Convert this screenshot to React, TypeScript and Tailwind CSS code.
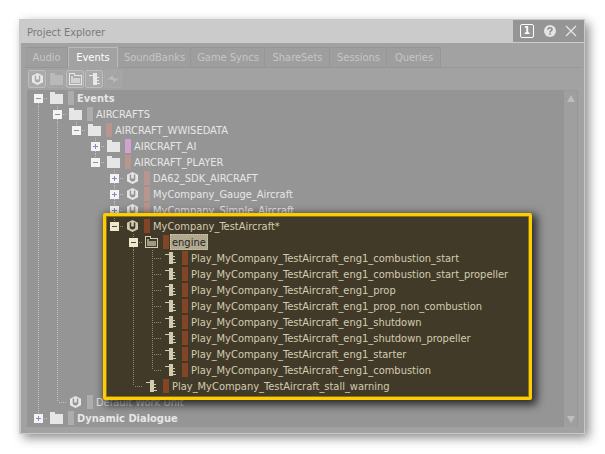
import React from "react";

type IconKind = "folder" | "virtual" | "unit" | "event";

function FolderIcon() {
  return (
    <svg width="13" height="12" viewBox="0 0 13 12" shapeRendering="crispEdges" fill="currentColor" aria-hidden="true">
      <path d="M0 0h5v2h8v10H0z" />
    </svg>
  );
}

function VirtualFolderIcon() {
  return (
    <svg width="13" height="12" viewBox="0 0 13 12" shapeRendering="crispEdges" fill="currentColor" aria-hidden="true">
      <path fillRule="evenodd" d="M0 0h6v2h7v10H0zM1 1v10h11V3H5V1z" />
      <path opacity=".65" d="M2 3h2v2h7v5H2z" />
    </svg>
  );
}

function UnitIcon() {
  return (
    <svg width="11" height="12" viewBox="0 0 11 12" fill="currentColor" aria-hidden="true">
      <path fillRule="evenodd" d="M5.500 0L11 2.700v6.600L5.500 12 0 9.300V2.700zM2.700 2.600V7a2.800 2.400 0 0 0 5.600 0V2.600H6.800V6.500H4.200V2.600z" />
    </svg>
  );
}

function EventIcon() {
  return (
    <svg width="11" height="12" viewBox="0 0 11 12" shapeRendering="crispEdges" fill="currentColor" aria-hidden="true">
      <path d="M0 2h4v1H0zM4 0h4v12H4zM8 4h2v1H8zM8 7h2v1H8zM8 10h3v1H8z" />
    </svg>
  );
}

const icons: Record<IconKind, React.ReactNode> = {
  folder: <FolderIcon />,
  virtual: <VirtualFolderIcon />,
  unit: <UnitIcon />,
  event: <EventIcon />,
};

const bars = {
  gray: "bg-[#adadad]",
  rose: "bg-[#b8958d]",
  pink: "bg-[#d3a0d3]",
  rust: "bg-[#824627]",
};

interface Item {
  label: string;
  level: number;
  icon: IconKind;
  bar: keyof typeof bars;
  guides?: number[];
  open?: boolean;
  first?: boolean;
  last?: boolean;
  bold?: boolean;
  selected?: boolean;
}

const before: Item[] = [
  { label: "Events", level: 0, icon: "folder", bar: "gray", open: true, first: true, bold: true },
  { label: "AIRCRAFTS", level: 1, icon: "folder", bar: "gray", open: true, guides: [0] },
  { label: "AIRCRAFT_WWISEDATA", level: 2, icon: "folder", bar: "rose", open: true, last: true, guides: [0, 1] },
  { label: "AIRCRAFT_AI", level: 3, icon: "folder", bar: "pink", open: false, guides: [0, 1] },
  { label: "AIRCRAFT_PLAYER", level: 3, icon: "folder", bar: "rose", open: true, last: true, guides: [0, 1] },
  { label: "DA62_SDK_AIRCRAFT", level: 4, icon: "unit", bar: "rose", open: false, guides: [0, 1] },
  { label: "MyCompany_Gauge_Aircraft", level: 4, icon: "unit", bar: "rose", open: false, guides: [0, 1] },
  { label: "MyCompany_Simple_Aircraft", level: 4, icon: "unit", bar: "rose", open: false, guides: [0, 1] },
];

const engineEvents = [
  "combustion_start",
  "combustion_start_propeller",
  "prop",
  "prop_non_combustion",
  "shutdown",
  "shutdown_propeller",
  "starter",
  "combustion",
];

const highlighted: Item[] = [
  { label: "MyCompany_TestAircraft*", level: 4, icon: "unit", bar: "rust", open: true, last: true, guides: [0, 1] },
  { label: "engine", level: 5, icon: "virtual", bar: "rust", open: true, selected: true, guides: [0, 1] },
  ...engineEvents.map((name, i): Item => ({
    label: `Play_MyCompany_TestAircraft_eng1_${name}`,
    level: 6,
    icon: "event",
    bar: "rust",
    guides: [0, 1, 5],
    last: i === engineEvents.length - 1,
  })),
  { label: "Play_MyCompany_TestAircraft_stall_warning", level: 5, icon: "event", bar: "rust", last: true, guides: [0, 1] },
];

const after: Item[] = [
  { label: "Default Work Unit", level: 1, icon: "unit", bar: "gray", last: true, guides: [0] },
  { label: "Dynamic Dialogue", level: 0, icon: "folder", bar: "gray", open: false, last: true, bold: true },
];

// Dotted connectors: one pixel on, one pixel off, in the current text colour.
const dotsDown = "w-px shrink-0 bg-[repeating-linear-gradient(to_bottom,currentColor_0_1px,transparent_1px_2px)]";
const dotsAcross = "h-px bg-[repeating-linear-gradient(to_right,currentColor_0_1px,transparent_1px_2px)]";

function Row({ item, lit = false }: { item: Item; lit?: boolean }) {
  const { level, guides = [], open, first, last } = item;
  const pale = "text-[#c2c2c2]";
  const line = lit ? "text-[#8f8870]" : pale;
  const cells = Array.from({ length: level }, (_, i) => i);
  return (
    <li
      role="treeitem"
      aria-level={level + 1}
      aria-expanded={open}
      aria-selected={item.selected ?? false}
      className={`flex h-4 items-center whitespace-nowrap ${lit ? "text-[#d3cbb0]" : "text-[#e6e6e6]"}`}
    >
      {cells.map((i) => (
        <span key={i} className={`flex h-4 w-[19px] shrink-0 pl-[9px] ${i < 2 ? pale : line}`}>
          {guides.includes(i) && <span className={dotsDown} />}
        </span>
      ))}
      {open === undefined ? (
        <span className={`flex h-4 w-[19px] shrink-0 pl-[9px] ${line}`}>
          <span className={`${dotsDown} ${last ? "h-2" : "h-4"}`} />
          <span className={`mt-2 ml-px grow ${dotsAcross}`} />
        </span>
      ) : (
        <span className={`flex h-4 w-[19px] shrink-0 items-center pl-[5px] ${line}`}>
          <span className="flex h-4 w-[9px] flex-col items-center">
            <span className={`h-1 ${first ? "" : dotsDown}`} />
            <button
              type="button"
              aria-label={`${open ? "Collapse" : "Expand"} ${item.label}`}
              className={`flex size-[9px] shrink-0 items-center justify-center ${lit ? "bg-[#f0e8cc] text-[#4c473c]" : "bg-[#f4f4f4] text-[#7f8fb8]"}`}
            >
              <svg width="5" height="5" viewBox="0 0 5 5" shapeRendering="crispEdges" fill="currentColor" aria-hidden="true">
                <path d={open ? "M0 2h5v1H0z" : "M0 2h5v1H0zM2 0h1v5H2z"} />
              </svg>
            </button>
            <span className={`h-[3px] ${last ? "" : dotsDown}`} />
          </span>
          <span className={`ml-px grow ${dotsAcross}`} />
        </span>
      )}
      <span className="flex w-[17px] shrink-0 items-center justify-center">{icons[item.icon]}</span>
      <span className={`ml-[3px] h-3.5 w-1.5 shrink-0 ${bars[item.bar]}`} />
      <span
        className={`ml-px px-0.5 pt-0.5 leading-3.5 ${item.bold ? "font-bold" : ""} ${item.selected ? "bg-[#b0a88f] text-[#29261c] outline-1 -outline-offset-1 outline-dotted outline-[#cfc7ac]" : ""}`}
      >
        {item.label}
      </span>
    </li>
  );
}

const tabs = ["Audio", "Events", "SoundBanks", "Game Syncs", "ShareSets", "Sessions", "Queries"];
const tabWidths = ["w-[43px]", "w-[50px]", "w-[73px]", "w-[74px]", "w-[65px]", "w-[57px]", "w-[54px]"];

const tools = [
  { label: "New work unit", icon: <UnitIcon />, enabled: true },
  { label: "New physical folder", icon: <FolderIcon />, enabled: false },
  { label: "New virtual folder", icon: <VirtualFolderIcon />, enabled: true },
  { label: "New event", icon: <EventIcon />, enabled: true },
  {
    label: "Convert",
    enabled: false,
    icon: (
      <svg width="12" height="12" viewBox="0 0 12 12" fill="currentColor" aria-hidden="true">
        <path d="M0 6.500L6 2v3h2v1.500zM12 5.500L6 10V7H4V5.500z" />
      </svg>
    ),
  },
];

export default function App() {
  return (
    <main className="min-h-screen bg-white pt-[19px] pr-5 pb-5 pl-[19px] font-['DejaVu_Sans_Condensed','DejaVu_Sans',sans-serif] text-[11px]">
      <section className="border border-l-2 border-[#c9c9c9] bg-[#a2a2a2] shadow-[4px_4px_10px_rgba(0,0,0,0.45)]">
        <header className="flex h-[23px] items-stretch justify-between bg-[#cbcbcb]">
          <h1 className="pt-[3px] pl-1.5 leading-5 text-[#7a7a7a]">Project Explorer</h1>
          <div className="mb-px flex w-[71px] items-center justify-between bg-[#959595] px-[7px] text-[#e4e4e4]">
            <button type="button" className="flex size-3.5 items-center justify-center rounded-xs border border-current text-[10px] leading-3 font-bold text-white">
              1
            </button>
            <button type="button" aria-label="Help">
              <svg width="12" height="12" viewBox="0 0 12 12" aria-hidden="true">
                <circle cx="6" cy="6" r="6" fill="currentColor" />
                <path d="M4 4.700C4 2.200 8 2.200 8 4.500 8 6 6 5.900 6 7.400M6 8.300v1.500" fill="none" stroke="#8e8e8e" strokeWidth="1.600" />
              </svg>
            </button>
            <button type="button" aria-label="Close">
              <svg width="12" height="12" viewBox="0 0 12 12" fill="none" stroke="currentColor" strokeWidth="1.300" aria-hidden="true">
                <path d="M1 1l10 10M11 1L1 11" />
              </svg>
            </button>
          </div>
        </header>

        <div role="tablist" className="mx-0.5 flex pt-1">
          <span className="w-0.5 border-b border-[#989898]" />
          {tabs.map((tab, i) => (
            <button
              key={tab}
              type="button"
              role="tab"
              aria-selected={tab === "Events"}
              className={`h-[21px] shrink-0 border pt-0.5 text-center whitespace-nowrap ${tabWidths[i]} ${
                tab === "Events"
                  ? "border-[#bababa] border-b-transparent text-white"
                  : "border-[#969696] border-l-transparent bg-[#9e9e9e] text-[#c6c6c6]"
              }`}
            >
              {tab}
            </button>
          ))}
          <span className="grow border-b border-[#989898]" />
        </div>

        <div role="toolbar" className="flex gap-px px-[7px] py-0.5">
          {tools.map((tool) => (
            <button
              key={tool.label}
              type="button"
              aria-label={tool.label}
              disabled={!tool.enabled}
              className={`flex size-[18px] items-center justify-center rounded-xs border ${
                tool.enabled ? "border-[#bdbdbd] bg-[#aaaaaa] text-[#e8e8e8]" : "border-[#a9a9a9] bg-[#a5a5a5] text-[#b9b9b9]"
              }`}
            >
              {tool.icon}
            </button>
          ))}
        </div>

        <div className="mr-1.5 mb-1.5 ml-1.5 flex bg-[#959595]">
          <div role="tree" aria-label="Events" className="min-w-0 grow pb-px pl-0.5">
            <ul role="group">
              {before.map((item) => (
                <Row key={item.label} item={item} />
              ))}
            </ul>
            <div className="relative z-10">
              <div className="absolute -top-[5px] right-8 -bottom-1.5 left-[74px] rounded-xs border-3 border-[#fc0] bg-[#423a29] shadow-[3px_3px_8px_2px_rgba(0,0,0,0.7),inset_0_0_0_1px_#8c7218]" />
              <ul role="group" className="relative">
                {highlighted.map((item) => (
                  <Row key={item.label} item={item} lit />
                ))}
              </ul>
            </div>
            <ul role="group">
              {after.map((item) => (
                <Row key={item.label} item={item} />
              ))}
            </ul>
          </div>
          <div className="flex w-3.5 shrink-0 flex-col items-center justify-between border-t border-r border-[#989898] bg-[#9f9f9f] py-1 text-[#bdbdbd]">
            <button type="button" aria-label="Scroll up">
              <svg width="8" height="7" viewBox="0 0 8 7" fill="currentColor" aria-hidden="true">
                <path d="M4 0l4 7H0z" />
              </svg>
            </button>
            <button type="button" aria-label="Scroll down">
              <svg width="8" height="7" viewBox="0 0 8 7" fill="currentColor" aria-hidden="true">
                <path d="M4 7L0 0h8z" />
              </svg>
            </button>
          </div>
        </div>
      </section>
    </main>
  );
}
